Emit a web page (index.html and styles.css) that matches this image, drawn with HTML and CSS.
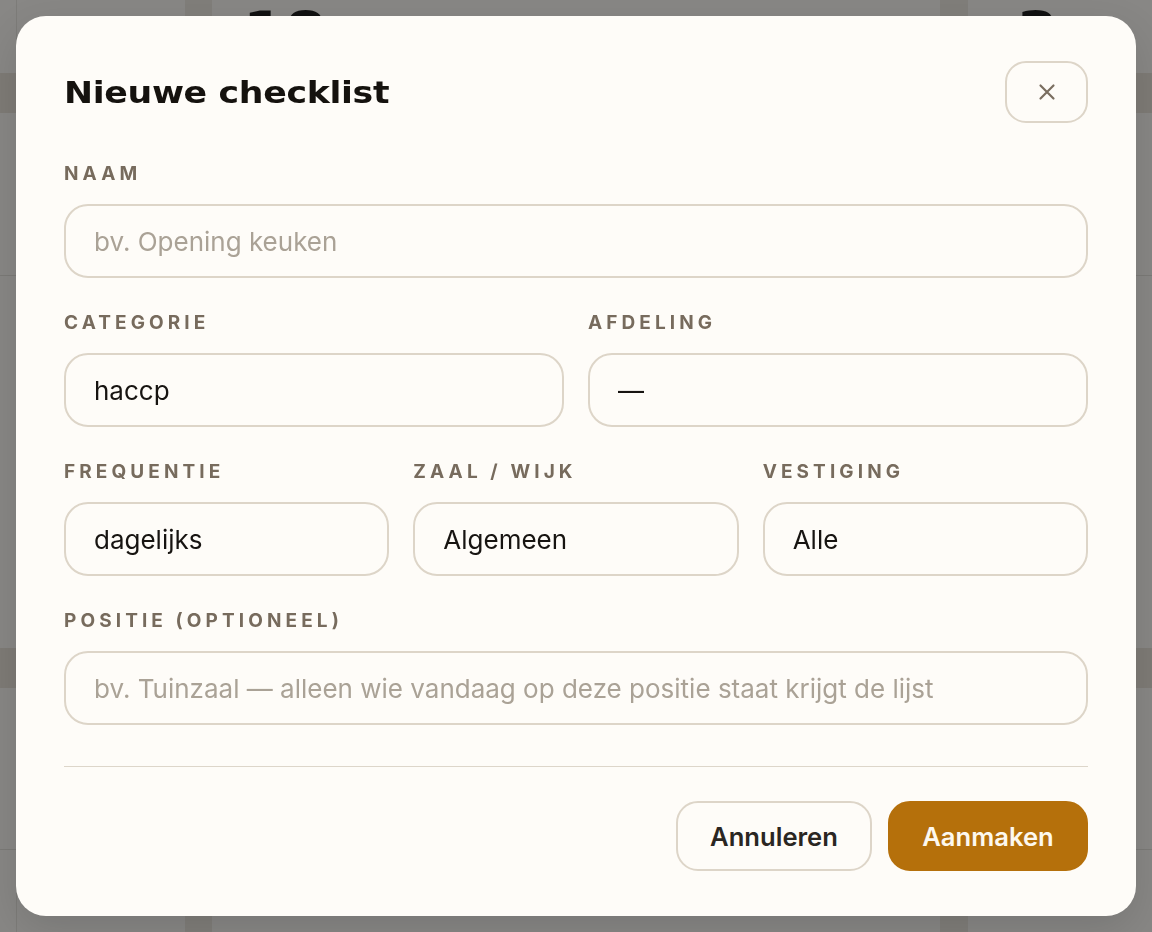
FILE: index.html
```html
<!DOCTYPE html>
<html lang="nl">
<head>
<meta charset="utf-8">
<title>Nieuwe checklist</title>
<link rel="stylesheet" href="styles.css">
</head>
<body>
<div class="page">
  <div class="page-top">
    <span class="big-num num-a">18</span>
    <span class="big-num num-b">3</span>
  </div>
</div>

<div class="modal" role="dialog" aria-labelledby="dlg-title">
  <div class="modal-head">
    <h2 id="dlg-title" class="modal-title">Nieuwe checklist</h2>
    <button class="close-btn" type="button" aria-label="Sluiten">
      <svg width="20" height="20" viewBox="0 0 20 20" aria-hidden="true">
        <path d="M3.5 3.5 L16.5 16.5 M16.5 3.5 L3.5 16.5" stroke="#7a6e60" stroke-width="2.2" stroke-linecap="round" fill="none"/>
      </svg>
    </button>
  </div>

  <form class="form">
    <div class="row row-1">
      <label class="field">
        <span class="label">Naam</span>
        <input class="input" type="text" placeholder="bv. Opening keuken">
      </label>
    </div>
    <div class="row row-2">
      <label class="field">
        <span class="label">Categorie</span>
        <input class="input" type="text" value="haccp">
      </label>
      <label class="field">
        <span class="label">Afdeling</span>
        <input class="input" type="text" value="—">
      </label>
    </div>
    <div class="row row-3">
      <label class="field">
        <span class="label">Frequentie</span>
        <input class="input" type="text" value="dagelijks">
      </label>
      <label class="field">
        <span class="label">Zaal / wijk</span>
        <input class="input" type="text" value="Algemeen">
      </label>
      <label class="field">
        <span class="label">Vestiging</span>
        <input class="input" type="text" value="Alle">
      </label>
    </div>
    <div class="row row-1">
      <label class="field">
        <span class="label">Positie (optioneel)</span>
        <input class="input" type="text" placeholder="bv. Tuinzaal — alleen wie vandaag op deze positie staat krijgt de lijst">
      </label>
    </div>
  </form>

  <div class="divider"></div>

  <div class="modal-foot">
    <button class="btn btn-ghost" type="button">Annuleren</button>
    <button class="btn btn-primary" type="button">Aanmaken</button>
  </div>
</div>
</body>
</html>
```

FILE: styles.css
```css
* { box-sizing: border-box; }

html, body {
  margin: 0;
  padding: 0;
  width: 1152px;
  height: 932px;
  overflow: hidden;
}

body {
  font-family: Inter, "DejaVu Sans", sans-serif;
  background: #888785;
}

/* dimmed page behind the dialog */
.page {
  width: 1152px;
  height: 932px;
  background-color: #888785;
  background-image:
    linear-gradient(to right, transparent 0 16px, #7d7c79 16px 17px, transparent 17px),
    linear-gradient(to right, transparent 0 185px, #807e7a 185px 212px, transparent 212px 940px, #807e7a 940px 968px, transparent 968px),
    linear-gradient(to bottom, transparent 0 73px, #7e7b76 73px 113px, transparent 113px 275px, #7b7a77 275px 276px, transparent 276px 648px, #7e7b76 648px 688px, transparent 688px 849px, #7b7a77 849px 850px, transparent 850px);
}

.page-top {
  display: flex;
  height: 73px;
}

.big-num {
  font-family: "DejaVu Sans", sans-serif;
  font-weight: 700;
  font-size: 60px;
  line-height: 1;
  color: #111;
  margin-top: 4px;
}

.num-a { margin-left: 243px; }
.num-b { margin-left: 690px; }

/* dialog */
.modal {
  position: fixed;
  left: 16px;
  top: 16px;
  width: 1120px;
  background: #fefcf8;
  border-radius: 30px;
  padding: 45px 48px 45px;
  box-shadow: 0 14px 40px rgba(0, 0, 0, 0.12);
  display: flex;
  flex-direction: column;
}

.modal > * { flex-shrink: 0; }

.modal-head {
  display: flex;
  align-items: center;
  justify-content: space-between;
  height: 62px;
  margin-bottom: 38px;
}

.modal-title {
  margin: 0;
  font-family: "DejaVu Sans", sans-serif;
  font-weight: 700;
  font-size: 31px;
  letter-spacing: -0.3px;
  color: #15120e;
  padding-top: 0;
  transform: scaleX(1.12);
  transform-origin: left center;
}

.close-btn {
  width: 83px;
  height: 62px;
  border: 2px solid #ddd5c8;
  border-radius: 21px;
  background: #fefcf8;
  display: flex;
  align-items: center;
  justify-content: center;
  padding: 0;
}

.form {
  display: flex;
  flex-direction: column;
  gap: 32px;
}

.row {
  display: grid;
  gap: 24px;
}

.row-1 { grid-template-columns: 1fr; }
.row-2 { grid-template-columns: 1fr 1fr; }
.row-3 { grid-template-columns: 1fr 1fr 1fr; }

.field {
  display: flex;
  flex-direction: column;
  gap: 19px;
}

.label {
  font-family: Inter, sans-serif;
  font-size: 19px;
  line-height: 22px;
  padding-top: 2px;
  font-weight: 700;
  letter-spacing: 4.1px;
  text-transform: uppercase;
  color: #776b5d;
}

.input {
  height: 74px;
  width: 100%;
  border: 2px solid #ddd5c8;
  border-radius: 24px;
  background: #fefcf8;
  padding: 0 28px;
  font-family: Inter, sans-serif;
  font-size: 26px;
  color: #171411;
  outline: none;
}

.input::placeholder {
  color: #aaa296;
  opacity: 1;
}

.divider {
  height: 1px;
  background: #ddd6ca;
  margin-top: 41px;
}

.modal-foot {
  display: flex;
  justify-content: flex-end;
  gap: 16px;
  margin-top: 34px;
}

.btn {
  height: 70px;
  border-radius: 22px;
  font-family: Inter, sans-serif;
  font-size: 25.6px;
  font-weight: 600;
  padding: 0 30px;
}

.btn-ghost {
  background: #fefcf8;
  border: 2px solid #ddd5c8;
  color: #2a2622;
  width: 196px;
}

.btn-primary {
  background: #b5700b;
  border: 2px solid #b5700b;
  color: #fdf8ef;
  width: 200px;
}
```
